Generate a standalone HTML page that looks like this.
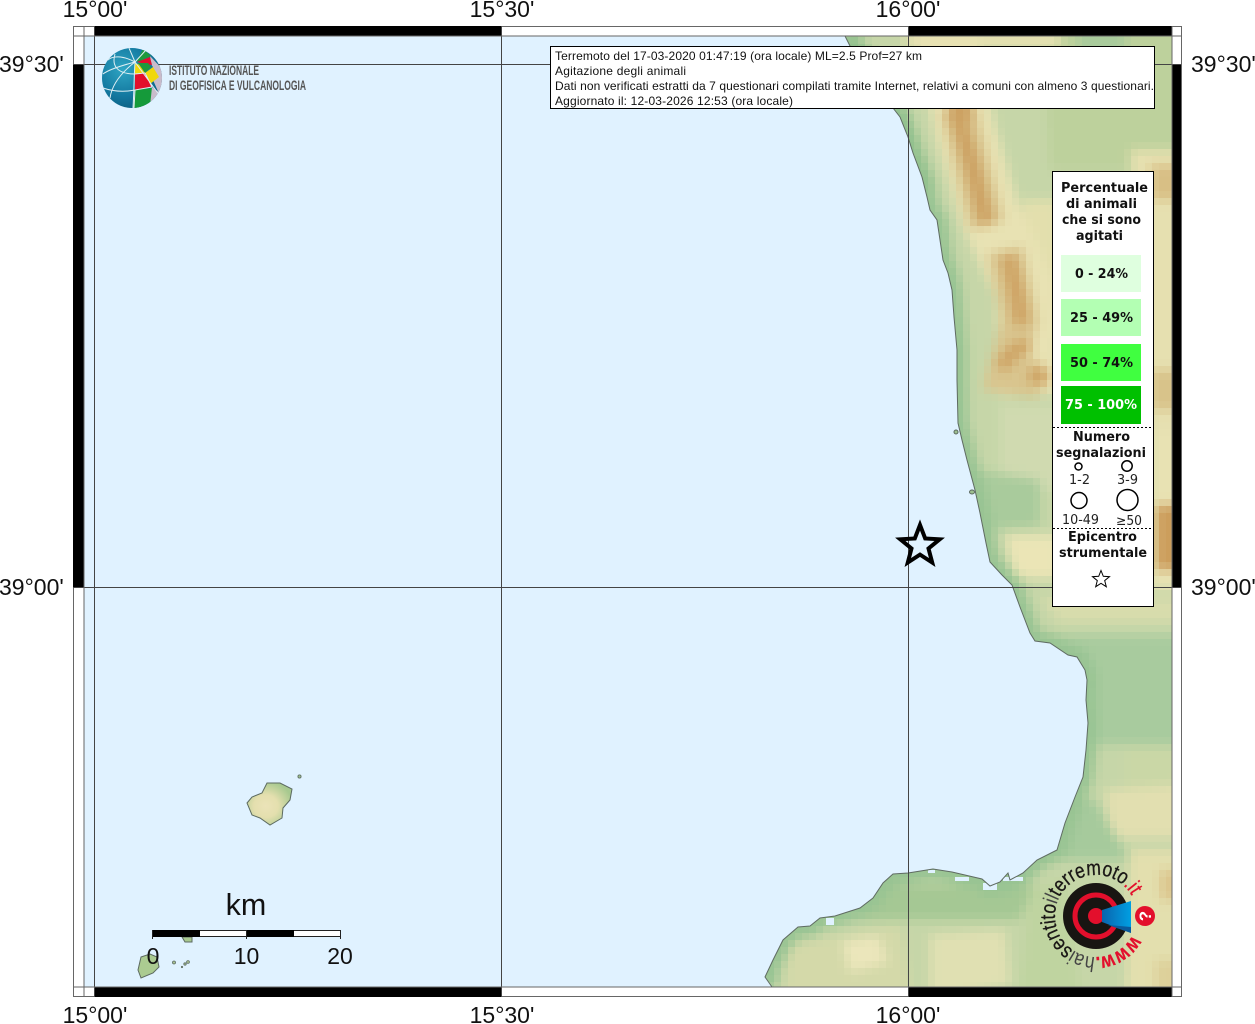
<!DOCTYPE html>
<html><head><meta charset="utf-8"><style>
html,body{margin:0;padding:0;background:#fff}
svg{display:block}
.l{font-family:"Liberation Sans",Arial,sans-serif;font-size:23px;fill:#111}
.b{font-family:"DejaVu Sans",sans-serif;font-weight:bold;font-size:13px;fill:#111}
.n{font-family:"DejaVu Sans",sans-serif;font-size:13px;fill:#222}
.t{font-family:"Liberation Sans",Arial,sans-serif;font-size:12px;fill:#111}
</style></head><body>
<svg xmlns="http://www.w3.org/2000/svg" width="1255" height="1024" viewBox="0 0 1255 1024">
<defs>
<path id="cp" d="M845 36L850 46L893 108L900 117L908 137L913 153L922 177L927 197L930 210L937 220L940 240L943 260L948 273L952 290L954 317L957 350L957 380L958 423L962 440L967 460L975 490L980 513L986 543L990 562L1002 575L1012 585L1020 607L1030 633L1035 641L1050 643L1068 655L1077 657L1085 670L1087 680L1086 700L1088 723L1086 750L1083 777L1075 797L1065 823L1057 850L1037 860L1023 873L1010 880L1008 873L1000 882L990 886L982 879L952 872L933 869L908 873L893 874L883 883L873 898L860 908L835 916L820 918L810 926L798 927L783 940L773 960L765 977L772 987"/>
<clipPath id="land"><path d="M845 36L850 46L893 108L900 117L908 137L913 153L922 177L927 197L930 210L937 220L940 240L943 260L948 273L952 290L954 317L957 350L957 380L958 423L962 440L967 460L975 490L980 513L986 543L990 562L1002 575L1012 585L1020 607L1030 633L1035 641L1050 643L1068 655L1077 657L1085 670L1087 680L1086 700L1088 723L1086 750L1083 777L1075 797L1065 823L1057 850L1037 860L1023 873L1010 880L1008 873L1000 882L990 886L982 879L952 872L933 869L908 873L893 874L883 883L873 898L860 908L835 916L820 918L810 926L798 927L783 940L773 960L765 977L772 987L1172 987L1172 36Z"/></clipPath>
<filter id="bl" filterUnits="userSpaceOnUse" x="700" y="0" width="540" height="1024" color-interpolation-filters="sRGB"><feGaussianBlur stdDeviation="5"/></filter>
<filter id="pix" filterUnits="userSpaceOnUse" primitiveUnits="userSpaceOnUse" x="760" y="30" width="420" height="960" color-interpolation-filters="sRGB">
<feFlood x="763" y="33" width="1" height="1" flood-color="#000"/>
<feComposite x="760" y="30" width="7" height="7"/>
<feTile x="760" y="30" width="420" height="960" result="a"/>
<feComposite in="SourceGraphic" in2="a" operator="in"/>
<feMorphology operator="dilate" radius="3"/>
</filter>
<linearGradient id="cone" x1="0" x2="1" y1="0" y2="0"><stop offset="0" stop-color="#0a64ad"/><stop offset="1" stop-color="#009fe3"/></linearGradient>
<radialGradient id="gl" cx="0.35" cy="0.35" r="0.75"><stop offset="0" stop-color="#2fa6c4"/><stop offset="0.6" stop-color="#13789f"/><stop offset="1" stop-color="#0b5a7c"/></radialGradient>
<clipPath id="gc"><circle cx="132" cy="78" r="30"/></clipPath>
<radialGradient id="isl" cx="0.42" cy="0.55" r="0.6"><stop offset="0" stop-color="#ebe3b8"/><stop offset="0.45" stop-color="#e4dfae"/><stop offset="1" stop-color="#a7c98f"/></radialGradient>
</defs>

<rect x="84" y="36" width="1088" height="951" fill="#e0f2ff"/>

<!-- terrain -->
<g clip-path="url(#land)"><g filter="url(#pix)"><rect x="760" y="30" width="420" height="960" fill="#c3d4a5"/>
<g filter="url(#bl)">
<rect x="700" y="0" width="540" height="1024" fill="#c6d6a8"/>
<path d="M1040 0L1240 0L1240 170L1050 170Z" fill="#bdd19c"/>
<path d="M1078 0H1125V58H1078Z" fill="#a9cb9c"/>
<path d="M905 0H1060V50H905Z" fill="#e4e0b0"/>
<path d="M1130 150H1240V430H1150Z" fill="#e6e0b0"/>
<path d="M1150 165H1240V200H1150Z" fill="#d8bf85"/>
<path d="M1022 200L1060 200L1060 340L1030 340Z" fill="#e3dfad"/>
<path d="M1150 370H1240V410H1150Z" fill="#d8c38a"/>
<path d="M1150 430H1240V590H1150Z" fill="#e8e2b3"/>
<path d="M1155 505H1240V570H1155Z" fill="#cc9e5c"/>
<path d="M1000 405L1060 405L1060 490L1000 490Z" fill="#d0dab0"/>
<path d="M975 470L1040 480L1040 525L990 530Z" fill="#a9cb9c"/>
<path d="M1005 535L1060 535L1060 578L1015 578Z" fill="#ebe5b6"/>
<path d="M1040 598L1240 598L1240 622L1060 622Z" fill="#d8dcac"/>
<path d="M1040 635L1240 635L1240 745L1090 745L1040 745Z" fill="#a8cb9e"/>
<path d="M1125 748H1240V790H1125Z" fill="#cad7a6"/>
<path d="M1105 790L1240 780V838H1110Z" fill="#e2dfb0"/>
<path d="M1060 800L1095 800L1130 860L1040 860Z" fill="#a6ca9c"/>
<path d="M1130 850H1240V1024H1125Z" fill="#e3dfae"/>
<path d="M1160 870H1240V900H1160Z" fill="#dcc68e"/>
<path d="M1155 960H1240V1000H1155Z" fill="#ddd09a"/>
<path d="M860 885H1035L1020 920H850Z" fill="#a5c894"/>
<path d="M790 945L900 925L915 1024H780Z" fill="#d4d9a9"/>
<path d="M842 942L878 936L888 962L850 972Z" fill="#ebe6bb"/>
<path d="M930 935L1005 930L1010 985L930 1000Z" fill="#e0e0b2"/>
<path d="M1030 890L1065 880L1085 1024H1015Z" fill="#bfd4a0"/>
<!-- ridges -->
<path d="M945 30L965 130L990 215L1025 290L1030 395" fill="none" stroke="#e8e2b3" stroke-width="60"/>
<path d="M958 108L972 165L987 225" fill="none" stroke="#d9c58e" stroke-width="36"/>
<path d="M1005 250L1020 320L1005 375L1040 380" fill="none" stroke="#d9c58e" stroke-width="36"/>
<path d="M957 115L972 165L987 225" fill="none" stroke="#cda263" stroke-width="16"/>
<path d="M948 110H972" stroke="#cda263" stroke-width="24"/>
<path d="M1008 255L1018 300L1022 325" fill="none" stroke="#cfa566" stroke-width="17"/>
<path d="M1000 368L1015 350L1030 345" fill="none" stroke="#cfa566" stroke-width="15"/>
<path d="M1030 372L1048 380" fill="none" stroke="#cfa566" stroke-width="18"/>
<!-- coastal green -->
<use href="#cp" fill="none" stroke="#98c493" stroke-width="20"/>
<path d="M845 36L893 108L925 190" fill="none" stroke="#92c18e" stroke-width="24"/>
</g></g>
<g fill="#e0f2ff"><rect x="928" y="870" width="7" height="3"/><rect x="955" y="877" width="14" height="4"/><rect x="983" y="883" width="14" height="7"/><rect x="1003" y="877" width="20" height="4"/><rect x="826" y="918" width="8" height="7"/></g>
</g>
<use href="#cp" fill="none" stroke="#5f6b62" stroke-width="1"/>

<!-- islands -->
<path d="M267 783L280 783L292 789L290 800L283 808L282 818L270 825L260 818L252 815L247 803L252 797L262 793Z" fill="url(#isl)" stroke="#5c6a60" stroke-width="1"/>
<circle cx="299.500" cy="776.500" r="1.600" fill="#9cbf8f" stroke="#5c6a60" stroke-width="0.800"/>
<path d="M141 957L150 954L157 957L159 967L153 973L141 978L138 970Z" fill="#abcb91" stroke="#5c6a60"/>
<path d="M182 937L192 937L192 942L185 942Z" fill="#a8c98f" stroke="#5c6a60"/>
<g fill="#a9c593" stroke="#5c6a60" stroke-width="0.800"><circle cx="174" cy="962.500" r="1.500"/><circle cx="182" cy="967" r="0.700"/><circle cx="185" cy="964" r="1.200"/><circle cx="188" cy="962" r="1.400"/></g>
<ellipse cx="956" cy="432" rx="2" ry="2" fill="#9cbf8f" stroke="#5c6a60"/>
<ellipse cx="972" cy="492" rx="2.500" ry="2" fill="#9cbf8f" stroke="#5c6a60"/>

<!-- frame -->
<rect x="73.500" y="26.500" width="1108" height="970" fill="none" stroke="#666"/>
<rect x="74" y="27" width="1107" height="9" fill="#fff"/>
<rect x="74" y="987" width="1107" height="9" fill="#fff"/>
<rect x="74" y="36" width="10" height="951" fill="#fff"/>
<rect x="1172" y="36" width="9" height="951" fill="#fff"/>
<g fill="#000">
<rect x="94" y="26" width="407" height="10"/><rect x="908" y="26" width="264" height="10"/>
<rect x="94" y="987" width="407" height="10"/><rect x="908" y="987" width="264" height="10"/>
<rect x="73" y="64" width="11" height="523"/><rect x="1172" y="64" width="9" height="523"/>
</g>
<g stroke="#444" stroke-width="1" fill="none">
<path d="M94.500 26V997M501.500 26V997M908.500 26V997"/>
<path d="M73 64.500H1181M73 587.500H1181"/>
<path d="M84 26V997M1172 26V997M73 36H1181M73 987H1181" stroke="#666"/>
</g>

<!-- axis labels -->
<g class="l" text-anchor="middle">
<text x="95" y="17">15°00'</text><text x="502" y="17">15°30'</text><text x="908" y="17">16°00'</text>
<text x="95" y="1023">15°00'</text><text x="502" y="1023">15°30'</text><text x="908" y="1023">16°00'</text>
</g>
<g class="l">
<text x="-1" y="72">39°30'</text><text x="-1" y="595">39°00'</text>
<text x="1191" y="72">39°30'</text><text x="1191" y="595">39°00'</text>
</g>

<!-- INGV logo -->
<circle cx="132" cy="78" r="30" fill="url(#gl)"/>
<g clip-path="url(#gc)">
<path d="M150 56L165 72L160 96L153 80L153 67L151 64Z" fill="#c9bccb"/>
<path d="M137 61L143 49L151 56L138 62Z" fill="#1f9a3c"/>
<path d="M137 62L150 57L152 65L145 64Z" fill="#e30f2c"/>
<path d="M135 63L140 65L145 73L135 74Z" fill="#f0d80a"/>
<path d="M138 63L148 63L151 67L145 73Z" fill="#1f9a3c"/>
<path d="M145 73L153 67L159 77L150 84Z" fill="#f0d80a"/>
<path d="M135 74L145 73L152 87L135 90Z" fill="#e30f2c"/>
<path d="M135 90L152 88L150 110L133 110Z" fill="#159a3a"/>
<path d="M152 87L160 93L150 106Z" fill="#c9bccb"/>
<g fill="none" stroke="#e0eff3" stroke-width="1">
<path d="M135 62C122 55 112 56 108 60"/><path d="M135 62C120 66 108 70 103 74"/>
<path d="M135 62C122 72 112 84 110 98"/><path d="M135 62C134 78 134 92 133 108"/>
<path d="M135 62L129 48"/><path d="M135 62L146 50"/>
<path d="M115 54C112 64 115 74 135 74"/><path d="M103 88C115 92 125 92 135 90"/>
<path d="M135 90L152 87M135 74L145 73M145 73L152 87M135 62L160 96M135 90L134 108"/>
</g>
</g>
<g font-family="'Liberation Sans Narrow','Liberation Sans',sans-serif" font-size="13.500" fill="#555" font-weight="bold">
<text x="169" y="75" textLength="90" lengthAdjust="spacingAndGlyphs">ISTITUTO NAZIONALE</text>
<text x="169" y="90" textLength="137" lengthAdjust="spacingAndGlyphs">DI GEOFISICA E VULCANOLOGIA</text>
</g>

<!-- title box -->
<rect x="550.500" y="46.500" width="604" height="62" fill="#fff" stroke="#000"/>
<g class="t">
<text x="555" y="60" textLength="367" lengthAdjust="spacing">Terremoto del 17-03-2020 01:47:19 (ora locale) ML=2.5 Prof=27 km</text>
<text x="555" y="75" textLength="131" lengthAdjust="spacing">Agitazione degli animali</text>
<text x="555" y="90" textLength="599" lengthAdjust="spacing">Dati non verificati estratti da 7 questionari compilati tramite Internet, relativi a comuni con almeno 3 questionari.</text>
<text x="555" y="105" textLength="238" lengthAdjust="spacing">Aggiornato il: 12-03-2026 12:53 (ora locale)</text>
</g>

<!-- epicentre star -->
<path d="M920 525L925.200 538.500L939.700 539.300L928.500 548.500L932.200 562.500L920 554.600L907.800 562.500L911.500 548.500L900.300 539.300L914.800 538.500Z" fill="none" stroke="#000" stroke-width="4"/>

<!-- legend -->
<rect x="1052.500" y="171.500" width="101" height="435" fill="#fff" stroke="#000"/>
<rect x="1061" y="255" width="80" height="37" fill="#dfffdf"/>
<rect x="1061" y="299" width="80" height="37" fill="#b3ffb3"/>
<rect x="1061" y="344" width="80" height="37" fill="#40ff40"/>
<rect x="1061" y="386" width="80" height="38" fill="#00c000"/>
<path d="M1053 427.500H1153M1053 528.500H1153" stroke="#000" stroke-dasharray="2 2"/>
<g class="b">
<text x="1061" y="192" textLength="87" lengthAdjust="spacingAndGlyphs">Percentuale</text>
<text x="1066" y="208" textLength="71" lengthAdjust="spacingAndGlyphs">di animali</text>
<text x="1062" y="224" textLength="79" lengthAdjust="spacingAndGlyphs">che si sono</text>
<text x="1076" y="240" textLength="47" lengthAdjust="spacingAndGlyphs">agitati</text>
<text x="1075" y="278" textLength="53" lengthAdjust="spacingAndGlyphs">0 - 24%</text>
<text x="1070" y="322" textLength="63" lengthAdjust="spacingAndGlyphs">25 - 49%</text>
<text x="1070" y="367" textLength="63" lengthAdjust="spacingAndGlyphs">50 - 74%</text>
<text x="1065" y="409" textLength="72" lengthAdjust="spacingAndGlyphs" style="fill:#fff">75 - 100%</text>
<text x="1073" y="441" textLength="57" lengthAdjust="spacingAndGlyphs">Numero</text>
<text x="1056" y="457" textLength="90" lengthAdjust="spacingAndGlyphs">segnalazioni</text>
<text x="1068" y="541" textLength="69" lengthAdjust="spacingAndGlyphs">Epicentro</text>
<text x="1059" y="557" textLength="88" lengthAdjust="spacingAndGlyphs">strumentale</text>
</g>
<g fill="none" stroke="#000" stroke-width="1.500">
<circle cx="1078.500" cy="466.500" r="3.500"/><circle cx="1127" cy="466" r="5.200"/>
<circle cx="1079" cy="500.500" r="8"/><circle cx="1127.500" cy="500" r="10.500"/>
</g>
<g class="n">
<text x="1069" y="484" textLength="21" lengthAdjust="spacingAndGlyphs">1-2</text>
<text x="1117" y="484" textLength="21" lengthAdjust="spacingAndGlyphs">3-9</text>
<text x="1062" y="524" textLength="37" lengthAdjust="spacingAndGlyphs">10-49</text>
<text x="1116" y="525" textLength="26" lengthAdjust="spacingAndGlyphs">≥50</text>
</g>
<path d="M1101 570.500L1103.300 576.300L1109.500 576.700L1104.700 580.600L1106.300 586.700L1101 583.300L1095.700 586.700L1097.300 580.600L1092.500 576.700L1098.700 576.300Z" fill="#fff" stroke="#000" stroke-width="1"/>

<!-- scale bar -->
<text x="246" y="915" text-anchor="middle" font-family="'Liberation Sans',sans-serif" font-size="30.500" fill="#111">km</text>
<rect x="152.500" y="930.500" width="188" height="6" fill="#fff" stroke="#222"/>
<rect x="152" y="930" width="48" height="7" fill="#000"/>
<rect x="246" y="930" width="48" height="7" fill="#000"/>
<path d="M152.500 930V939M246.500 930V939M340.500 930V939" stroke="#222" fill="none"/>
<g class="l" text-anchor="middle"><text x="153" y="964">0</text><text x="246.500" y="964">10</text><text x="340" y="964">20</text></g>

<!-- hai sentito logo -->
<circle cx="1096" cy="916" r="33" fill="#181512"/>
<circle cx="1096" cy="916" r="21" fill="none" stroke="#e30f2c" stroke-width="5"/>
<circle cx="1096" cy="916" r="8" fill="#e30f2c"/>
<path d="M1102 910L1131 901L1131 933L1102 922Z" fill="url(#cone)"/>
<path d="M1108 925L1131 927L1131 933Z" fill="#0a5a9c"/>
<circle cx="1145" cy="916" r="10" fill="#e30f2c"/>
<text transform="translate(1151,916) rotate(-90)" font-family="'Liberation Sans',sans-serif" font-weight="bold" font-size="17" fill="#fff" text-anchor="middle">?</text>
<path id="arc" d="M1132.200 935.200A41 41 0 1 1 1131.500 895.500" fill="none"/>
<text font-family="'Liberation Sans Narrow','Liberation Sans',sans-serif" font-size="21" fill="#1a1716" stroke="#1a1716" stroke-width="0.300"><textPath href="#arc" textLength="216" lengthAdjust="spacingAndGlyphs"><tspan fill="#e30f2c" stroke="#e30f2c" font-weight="bold">www.</tspan><tspan fill="#444" stroke="none">hai</tspan>sentito<tspan fill="#444" stroke="none">il</tspan>terremoto<tspan fill="#e30f2c" stroke="#e30f2c">.it</tspan></textPath></text>
</svg>
</body></html>
